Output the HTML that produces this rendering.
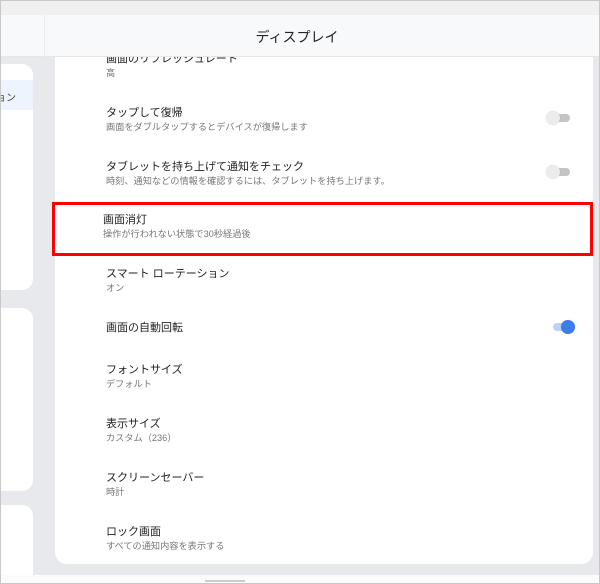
<!DOCTYPE html>
<html><head><meta charset="utf-8"><style>
*{margin:0;padding:0;box-sizing:border-box}
body{width:600px;height:584px;position:relative;overflow:hidden;background:#e8e9ec;font-family:"Liberation Sans","Noto Sans CJK JP",sans-serif;}
.frame{position:absolute;inset:0;border:1px solid #c8c8c8;z-index:20;pointer-events:none}
.top{position:absolute;left:0;top:0;width:600px;height:15px;background:#f0f0f0}
.hdr{position:absolute;left:0;top:15px;width:600px;height:42px;background:#f8f9fa;border-bottom:1px solid #e6e6e6}
.hdr .sep{position:absolute;left:44px;top:0;width:1px;height:42px;background:#ececec}
.hdr .t{position:absolute;left:0;width:594px;text-align:center;top:12px;font-size:14px;color:#222}
.lc{position:absolute;left:0;width:33px;background:#fff;border-radius:0 11px 11px 0}
.main{position:absolute;left:55px;top:57px;width:538px;height:507px;background:#fff;border-radius:0 0 12px 12px;overflow:hidden}
.it{position:absolute;left:51px}
.ti{font-size:11px;color:#222;line-height:15px}
.su{font-size:9.2px;color:#777;line-height:13px}
.tg{position:absolute;width:22px;height:8px;border-radius:4px;background:#c4c4c4}
.tg i{position:absolute;left:-2px;top:-3px;width:14px;height:14px;border-radius:7px;background:#ececec;box-shadow:0 0 1px rgba(0,0,0,.2)}
.bot{position:absolute;left:0;top:575px;width:600px;height:9px;background:#fbfbfb}
</style></head><body>
<div class="top"></div>
<div class="hdr"><div class="sep"></div><div class="t">ディスプレイ</div></div>
<div class="lc" style="top:64px;height:226px"><div style="position:absolute;top:16px;left:0;width:33px;height:30px;background:#eef4fd"></div><div style="position:absolute;top:25px;left:-4px;font-size:10px;color:#444">ョン</div></div>
<div class="lc" style="top:308px;height:183px;border-radius:0 11px 11px 0"></div>
<div class="lc" style="top:505px;height:70px;border-radius:0 11px 0 0"></div>
<div class="main">
<div class="it" style="top:-5px"><div class="ti">画面のリフレッシュレート</div><div class="su">高</div></div>
<div class="it" style="top:49px"><div class="ti">タップして復帰</div><div class="su">画面をダブルタップするとデバイスが復帰します</div></div>
<div class="tg" style="left:493px;top:57px"><i></i></div>
<div class="it" style="top:103px"><div class="ti">タブレットを持ち上げて通知をチェック</div><div class="su">時刻、通知などの情報を確認するには、タブレットを持ち上げます。</div></div>
<div class="tg" style="left:493px;top:111px"><i></i></div>
<div class="it" style="top:156px;left:48px"><div class="ti">画面消灯</div><div class="su">操作が行われない状態で30秒経過後</div></div>
<div class="it" style="top:210px"><div class="ti">スマート ローテーション</div><div class="su">オン</div></div>
<div class="it" style="top:264px"><div class="ti">画面の自動回転</div></div>
<div class="tg" style="left:498px;top:266px;background:#bcd3f7"><i style="left:8px;background:#3b7de9"></i></div>
<div class="it" style="top:306px"><div class="ti">フォントサイズ</div><div class="su">デフォルト</div></div>
<div class="it" style="top:360px"><div class="ti">表示サイズ</div><div class="su">カスタム（236）</div></div>
<div class="it" style="top:414px"><div class="ti">スクリーンセーバー</div><div class="su">時計</div></div>
<div class="it" style="top:468px"><div class="ti">ロック画面</div><div class="su">すべての通知内容を表示する</div></div>
</div>
<div style="position:absolute;left:52px;top:202px;width:541px;height:54px;border:3px solid #f00;z-index:10"></div>
<div class="bot"><div style="position:absolute;left:205px;top:5px;width:40px;height:2px;background:#ccc"></div></div>
<div class="frame"></div>
</body></html>
